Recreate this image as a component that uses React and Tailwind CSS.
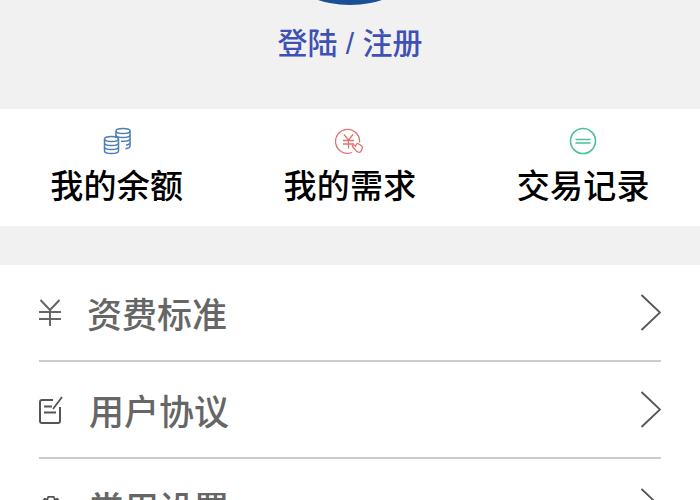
import React from "react";

const font = "font-['Liberation_Sans','Noto_Sans_CJK_SC',sans-serif]";

const CoinsIcon = () => (
  <svg width="28" height="28" viewBox="0 0 28 28" fill="none" stroke="#4f7fb5" strokeWidth="1.500">
    <ellipse cx="20" cy="4" rx="7" ry="2.500" />
    <path d="M13 4v7M27 4v15c0 1.200-1.800 2.300-4.500 2.700" />
    <path d="M13 8c0 1.400 3.100 2.500 7 2.500s7-1.100 7-2.500M18 14.200c.6.100 1.300.100 2 .100 3.900 0 7-1.100 7-2.500M23 18c2.400-.3 4-1.200 4-2.300" />
    <ellipse cx="8.500" cy="12" rx="7" ry="2.500" />
    <path d="M1.500 12v12c0 1.400 3.100 2.500 7 2.500s7-1.100 7-2.500V12" />
    <path d="M1.500 16c0 1.400 3.100 2.500 7 2.500s7-1.100 7-2.500M1.500 20c0 1.400 3.100 2.500 7 2.500s7-1.100 7-2.500" />
  </svg>
);

const YuanHandIcon = () => (
  <svg width="30" height="26" viewBox="0 0 30 26" fill="none" stroke="#e0716f" strokeWidth="1.300">
    <path d="M17 24.500a12 12 0 1 1 7.500-10" />
    <path d="M9 6.500l4.500 5.500 4.500-5.500M8 12.500h11M8 16h11M13.500 12v8.500" />
    <path d="M17.500 18.500c-.8-1 .5-2.200 1.500-1.400l1.500 1.200 1-2.200c.5-.9 1.700-.4 2.700.2l2.300 1.400c1 .6 1.200 1.600.8 2.500l-1 2.500c-.5 1.200-1.700 1.800-3 1.500-1.500-.4-2.500-1.500-3.300-2.700z" />
  </svg>
);

const EqualIcon = () => (
  <svg width="28" height="28" viewBox="0 0 28 28" fill="none" stroke="#4cc196" strokeWidth="1.600">
    <circle cx="14" cy="14" r="12.500" />
    <path d="M6.500 12.500h15M6.500 16h15" />
  </svg>
);

const YenIcon = () => (
  <svg width="22" height="28" viewBox="0 0 22 28" fill="none" stroke="#666" strokeWidth="2">
    <path d="M1.500 1l9.500 10 9.500-10M0 13h22M0 20h22M11 11v16" />
  </svg>
);

const NoteIcon = () => (
  <svg width="24" height="28" viewBox="0 0 24 28" fill="none" stroke="#555" strokeWidth="2">
    <path d="M14 4H3a2 2 0 0 0-2 2v19a2 2 0 0 0 2 2h16a2 2 0 0 0 2-2V11" />
    <path d="M14 13L23 1M5 10.500h8M5 16.500h12" strokeWidth="1.800" />
  </svg>
);

const GearIcon = () => (
  <svg width="26" height="26" viewBox="0 0 26 26" fill="none" stroke="#555" strokeWidth="1.800">
    <path d="M10 2h6l1 3 3-1 3 5-2 3 2 3-3 5-3-1-1 3h-6l-1-3-3 1-3-5 2-3-2-3 3-5 3 1z" />
    <circle cx="13" cy="12" r="4" />
  </svg>
);

const Chevron = () => (
  <svg width="21" height="37" viewBox="0 0 21 37" fill="none" stroke="#555" strokeWidth="1.800" className="flex-none">
    <path d="M1.500 1L20 18.500 1.500 36" />
  </svg>
);

const tabs = [
  { icon: <CoinsIcon />, label: "我的余额" },
  { icon: <YuanHandIcon />, label: "我的需求" },
  { icon: <EqualIcon />, label: "交易记录" },
];

const rows = [
  { icon: <YenIcon />, label: "资费标准", gap: "ml-[24px]" },
  { icon: <NoteIcon />, label: "用户协议", gap: "ml-[26px]" },
  { icon: <GearIcon />, label: "常用设置", gap: "ml-[26px]" },
];

export default function App() {
  return (
    <div className={`w-[700px] h-[500px] overflow-hidden bg-white ${font}`}>
      <div className="h-[109px] bg-[#f1f1f1] flex flex-col items-center overflow-hidden">
        <div className="w-[210px] h-[210px] flex-none rounded-full bg-[#1a4f96] mt-[-205px]" />
        <div className="mt-[21px] text-[30px] leading-[36px] font-medium text-[#3f51b5]">登陆 / 注册</div>
      </div>

      <div className="grid grid-cols-3 h-[117px] bg-white">
        {tabs.map(t => (
          <div key={t.label} className="flex flex-col items-center pt-[18px]">
            <div className="h-[28px] flex items-center justify-center">{t.icon}</div>
            <div className="mt-[9px] text-[33px] tracking-[0.25px] leading-[46px] font-medium text-black whitespace-nowrap">{t.label}</div>
          </div>
        ))}
      </div>

      <div className="h-[39px] bg-[#f1f1f1]" />

      <div className="px-[39px]">
        {rows.map(r => (
          <div key={r.label} className="h-[97px] flex items-center border-b-2 border-[#cccccc]">
            <div className="w-[24px] flex-none flex justify-start">{r.icon}</div>
            <div className={`${r.gap} flex-1 pt-[7px] text-[35px] leading-[48px] font-medium text-[#666666] whitespace-nowrap`}>{r.label}</div>
            <Chevron />
          </div>
        ))}
      </div>
    </div>
  );
}
